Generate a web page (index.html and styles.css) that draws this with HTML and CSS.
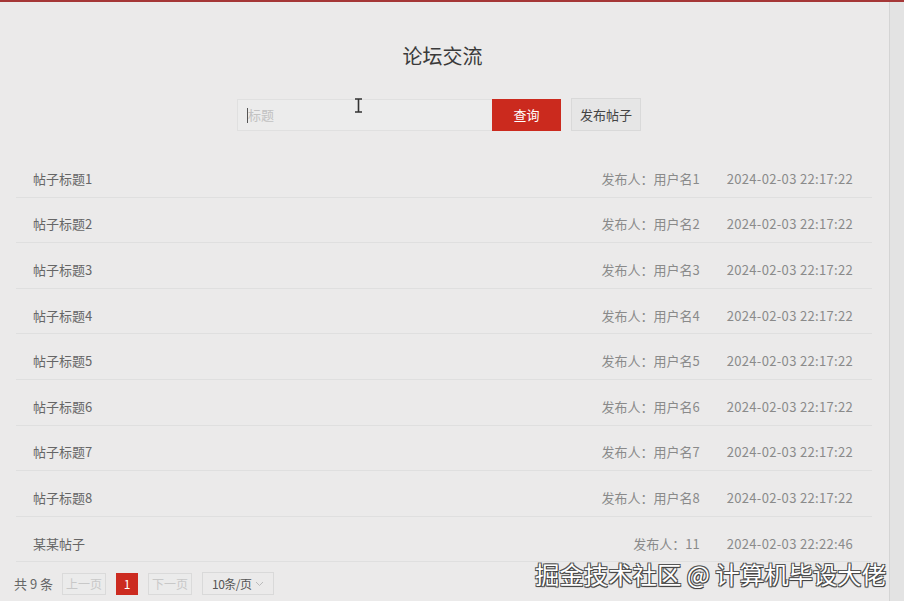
FILE: index.html
```html
<!DOCTYPE html>
<html lang="zh-CN">
<head>
<meta charset="utf-8">
<title>论坛交流</title>
<link rel="stylesheet" href="styles.css">
</head>
<body>
<div class="topbar"></div>
<div class="page">
  <main class="main">
    <h1 class="title">论坛交流</h1>
    <div class="search">
      <div class="search-input">
        <span class="caret"></span>
        <input type="text" placeholder="标题">
      </div>
      <button class="btn-query">查询</button>
      <button class="btn-publish">发布帖子</button>
      <svg class="ibeam" width="9" height="15" viewBox="0 0 9 15">
        <path d="M1 1h7M4.5 1v13M1 14h7" stroke="#333" stroke-width="1.6" fill="none"/>
      </svg>
    </div>

    <ul class="posts">
      <li class="post"><span class="post-title">帖子标题1</span><span class="post-author">发布人：用户名1</span><span class="post-time">2024-02-03 22:17:22</span></li>
      <li class="post"><span class="post-title">帖子标题2</span><span class="post-author">发布人：用户名2</span><span class="post-time">2024-02-03 22:17:22</span></li>
      <li class="post"><span class="post-title">帖子标题3</span><span class="post-author">发布人：用户名3</span><span class="post-time">2024-02-03 22:17:22</span></li>
      <li class="post"><span class="post-title">帖子标题4</span><span class="post-author">发布人：用户名4</span><span class="post-time">2024-02-03 22:17:22</span></li>
      <li class="post"><span class="post-title">帖子标题5</span><span class="post-author">发布人：用户名5</span><span class="post-time">2024-02-03 22:17:22</span></li>
      <li class="post"><span class="post-title">帖子标题6</span><span class="post-author">发布人：用户名6</span><span class="post-time">2024-02-03 22:17:22</span></li>
      <li class="post"><span class="post-title">帖子标题7</span><span class="post-author">发布人：用户名7</span><span class="post-time">2024-02-03 22:17:22</span></li>
      <li class="post"><span class="post-title">帖子标题8</span><span class="post-author">发布人：用户名8</span><span class="post-time">2024-02-03 22:17:22</span></li>
      <li class="post"><span class="post-title">某某帖子</span><span class="post-author">发布人：11</span><span class="post-time">2024-02-03 22:22:46</span></li>
    </ul>

    <div class="pager">
      <span class="pager-total">共 9 条</span>
      <button class="pager-btn disabled">上一页</button>
      <button class="pager-num active">1</button>
      <button class="pager-btn disabled">下一页</button>
      <div class="pager-size"><span>10条/页</span>
        <svg width="9" height="6" viewBox="0 0 9 6"><path d="M1 1l3.5 3.5L8 1" stroke="#bbb" fill="none"/></svg>
      </div>
    </div>

    <div class="mark">掘金技术社区 @ 计算机毕设大佬</div>
  </main>
  <div class="scrollbar"></div>
</div>
</body>
</html>
```

FILE: styles.css
```css
* { box-sizing: border-box; }

html, body {
  margin: 0;
  height: 100%;
}

body {
  background: #ebeaea;
  font-family: "Noto Sans CJK SC", "Noto Sans", sans-serif;
  color: #666;
  overflow: hidden;
}

.topbar {
  height: 2px;
  background: #a53737;
}

.page {
  display: flex;
  height: 599px;
}

.main {
  position: relative;
  flex: 1;
  min-width: 0;
}

.scrollbar {
  width: 15px;
  background: #e3e3e3;
  border-left: 1px solid #d4d4d4;
}

.title {
  margin: 40px 0 0;
  text-align: center;
  font-size: 20px;
  font-weight: normal;
  line-height: 28px;
  color: #3a3a3a;
  padding-right: 4px;
}

.search {
  position: relative;
  display: flex;
  justify-content: center;
  align-items: center;
  margin-top: 28px;
  padding-right: 11px;
}

.search-input {
  position: relative;
  width: 255px;
  height: 32px;
  border: 1px solid #e0e0e0;
  border-right: none;
  background: #ececec;
}

.search-input input {
  width: 100%;
  height: 100%;
  border: none;
  outline: none;
  background: transparent;
  padding: 0 0 0 10px;
  font: 13px "Noto Sans CJK SC", sans-serif;
  color: #333;
}

.search-input input::placeholder { color: #c2c2c2; }

.caret {
  position: absolute;
  left: 9px;
  top: 8px;
  width: 1px;
  height: 15px;
  background: #555;
}

.btn-query {
  width: 69px;
  height: 32px;
  border: none;
  background: #cb2a1e;
  color: #fff;
  font: 13px "Noto Sans CJK SC", sans-serif;
  margin-right: 10px;
}

.btn-publish {
  width: 70px;
  height: 33px;
  border: 1px solid #d9d9d9;
  background: #e6e6e6;
  color: #444;
  font: 13px "Noto Sans CJK SC", sans-serif;
}

.ibeam {
  position: absolute;
  left: 354px;
  top: 0;
}

.posts {
  list-style: none;
  margin: 21px 17px 0 16px;
  padding: 0;
}

.post {
  display: flex;
  align-items: center;
  height: 45.6px;
  padding: 9px 19px 0 17px;
  border-bottom: 1px solid #dfdfdf;
  font-size: 13px;
  line-height: 18px;
}

.post-title {
  flex: 1;
  color: #666;
}

.post-author {
  color: #8a8a8a;
  margin-right: 27px;
}

.post-time {
  color: #8a8a8a;
  letter-spacing: 0.32px;
  white-space: nowrap;
}

.pager {
  display: flex;
  align-items: center;
  gap: 10px;
  margin: 10px 0 0 14px;
  font-size: 13px;
}

.pager-total {
  color: #666;
  margin-right: -1px;
}

.pager-btn {
  width: 44px;
  height: 22px;
  padding: 0;
  border: 1px solid #dadada;
  background: #ebebeb;
  color: #c8c8c8;
  font: 12px "Noto Sans CJK SC", sans-serif;
}

.pager-num {
  width: 22px;
  height: 22px;
  padding: 0;
  border: none;
  background: #cc2b20;
  color: #fff;
  font: 12px "Noto Sans CJK SC", sans-serif;
}

.pager-size {
  display: flex;
  align-items: center;
  justify-content: space-between;
  width: 72px;
  height: 23px;
  padding: 0 9px 0 9px;
  border: 1px solid #d9d9d9;
  color: #555;
  font-size: 12px;
  white-space: nowrap;
  letter-spacing: -0.5px;
}

.mark {
  position: absolute;
  left: 535px;
  bottom: 12px;
  font-size: 24.4px;
  line-height: 30px;
  color: #fff;
  white-space: nowrap;
  text-shadow: 1px 1px 0 #444, -1px -1px 0 #555, 1px -1px 0 #555, -1px 1px 0 #555, 0 1px 1px #333;
}
```
